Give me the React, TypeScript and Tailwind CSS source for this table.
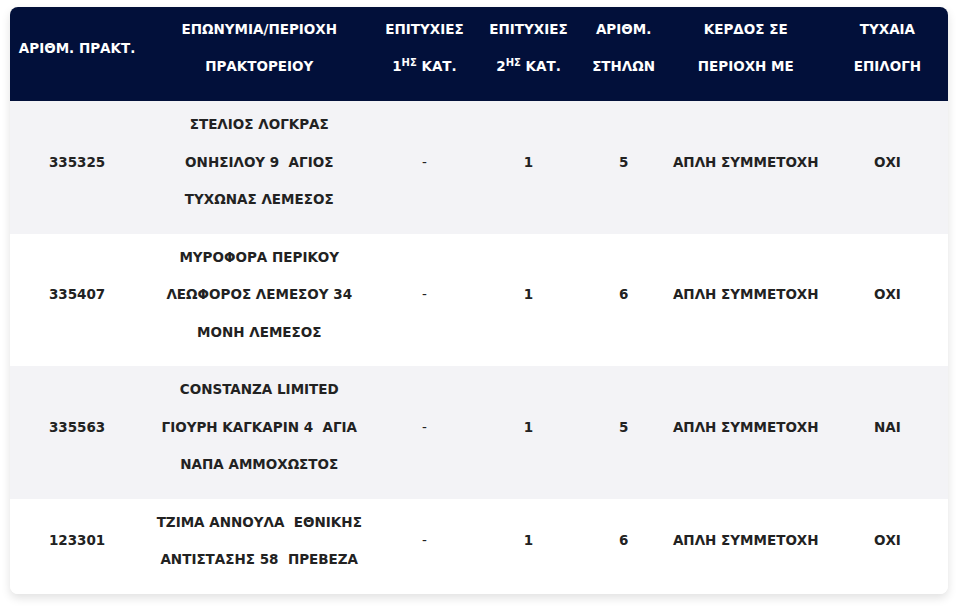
const rows = [
    { code: "335325", name: ["ΣΤΕΛΙΟΣ ΛΟΓΚΡΑΣ", "ΟΝΗΣΙΛΟΥ 9  ΑΓΙΟΣ", "ΤΥΧΩΝΑΣ ΛΕΜΕΣΟΣ"], first: "-", second: "1", cols: "5", gain: "ΑΠΛΗ ΣΥΜΜΕΤΟΧΗ", random: "ΟΧΙ" },
    { code: "335407", name: ["ΜΥΡΟΦΟΡΑ ΠΕΡΙΚΟΥ", "ΛΕΩΦΟΡΟΣ ΛΕΜΕΣΟΥ 34", "ΜΟΝΗ ΛΕΜΕΣΟΣ"], first: "-", second: "1", cols: "6", gain: "ΑΠΛΗ ΣΥΜΜΕΤΟΧΗ", random: "ΟΧΙ" },
    { code: "335563", name: ["CONSTANZA LIMITED", "ΓΙΟΥΡΗ ΚΑΓΚΑΡΙΝ 4  ΑΓΙΑ", "ΝΑΠΑ ΑΜΜΟΧΩΣΤΟΣ"], first: "-", second: "1", cols: "5", gain: "ΑΠΛΗ ΣΥΜΜΕΤΟΧΗ", random: "ΝΑΙ" },
    { code: "123301", name: ["ΤΖΙΜΑ ΑΝΝΟΥΛΑ  ΕΘΝΙΚΗΣ", "ΑΝΤΙΣΤΑΣΗΣ 58  ΠΡΕΒΕΖΑ"], first: "-", second: "1", cols: "6", gain: "ΑΠΛΗ ΣΥΜΜΕΤΟΧΗ", random: "ΟΧΙ" },
];

export default function App() {
    return (
        <div className="min-h-screen bg-white px-[10px] pt-[7px] pb-4" style={{ fontFamily: '"DejaVu Sans", Verdana, sans-serif' }}>
            <div className="rounded-lg overflow-hidden shadow-[0_4px_10px_rgba(0,0,0,0.12)]">
                <table className="w-full table-fixed border-collapse text-[13.5px] font-bold text-[#222]">
                    <colgroup>
                        <col className="w-[134px]" />
                        <col className="w-[230px]" />
                        <col className="w-[100px]" />
                        <col className="w-[108px]" />
                        <col className="w-[82px]" />
                        <col className="w-[162px]" />
                        <col className="w-[121px]" />
                    </colgroup>
                    <thead className="bg-[#02103a] text-white leading-[37px]">
                        <tr>
                            <th className="pt-[4px] pb-[16px] font-bold">ΑΡΙΘΜ. ΠΡΑΚΤ.</th>
                            <th className="pt-[4px] pb-[16px] font-bold">ΕΠΩΝΥΜΙΑ/ΠΕΡΙΟΧΗ<br />ΠΡΑΚΤΟΡΕΙΟΥ</th>
                            <th className="pt-[4px] pb-[16px] font-bold">ΕΠΙΤΥΧΙΕΣ<br />1<sup className="text-[10px]">ΗΣ</sup> ΚΑΤ.</th>
                            <th className="pt-[4px] pb-[16px] font-bold">ΕΠΙΤΥΧΙΕΣ<br />2<sup className="text-[10px]">ΗΣ</sup> ΚΑΤ.</th>
                            <th className="pt-[4px] pb-[16px] font-bold">ΑΡΙΘΜ.<br />ΣΤΗΛΩΝ</th>
                            <th className="pt-[4px] pb-[16px] font-bold">ΚΕΡΔΟΣ ΣΕ<br />ΠΕΡΙΟΧΗ ΜΕ</th>
                            <th className="pt-[4px] pb-[16px] font-bold">ΤΥΧΑΙΑ<br />ΕΠΙΛΟΓΗ</th>
                        </tr>
                    </thead>
                    <tbody className="leading-[37.5px] text-center">
                        {rows.map((r, i) => (
                            <tr key={r.code} className={i % 2 === 0 ? "bg-[#f3f3f6]" : "bg-white"}>
                                <td className="pt-[5px] pb-[15px]">{r.code}</td>
                                <td className="pt-[5px] pb-[15px] whitespace-pre">
                                    {r.name.map((line, j) => (
                                        <div key={j}>{line}</div>
                                    ))}
                                </td>
                                <td className="pt-[5px] pb-[15px] font-normal">{r.first}</td>
                                <td className="pt-[5px] pb-[15px]">{r.second}</td>
                                <td className="pt-[5px] pb-[15px]">{r.cols}</td>
                                <td className="pt-[5px] pb-[15px]">{r.gain}</td>
                                <td className="pt-[5px] pb-[15px]">{r.random}</td>
                            </tr>
                        ))}
                    </tbody>
                </table>
            </div>
        </div>
    );
}
